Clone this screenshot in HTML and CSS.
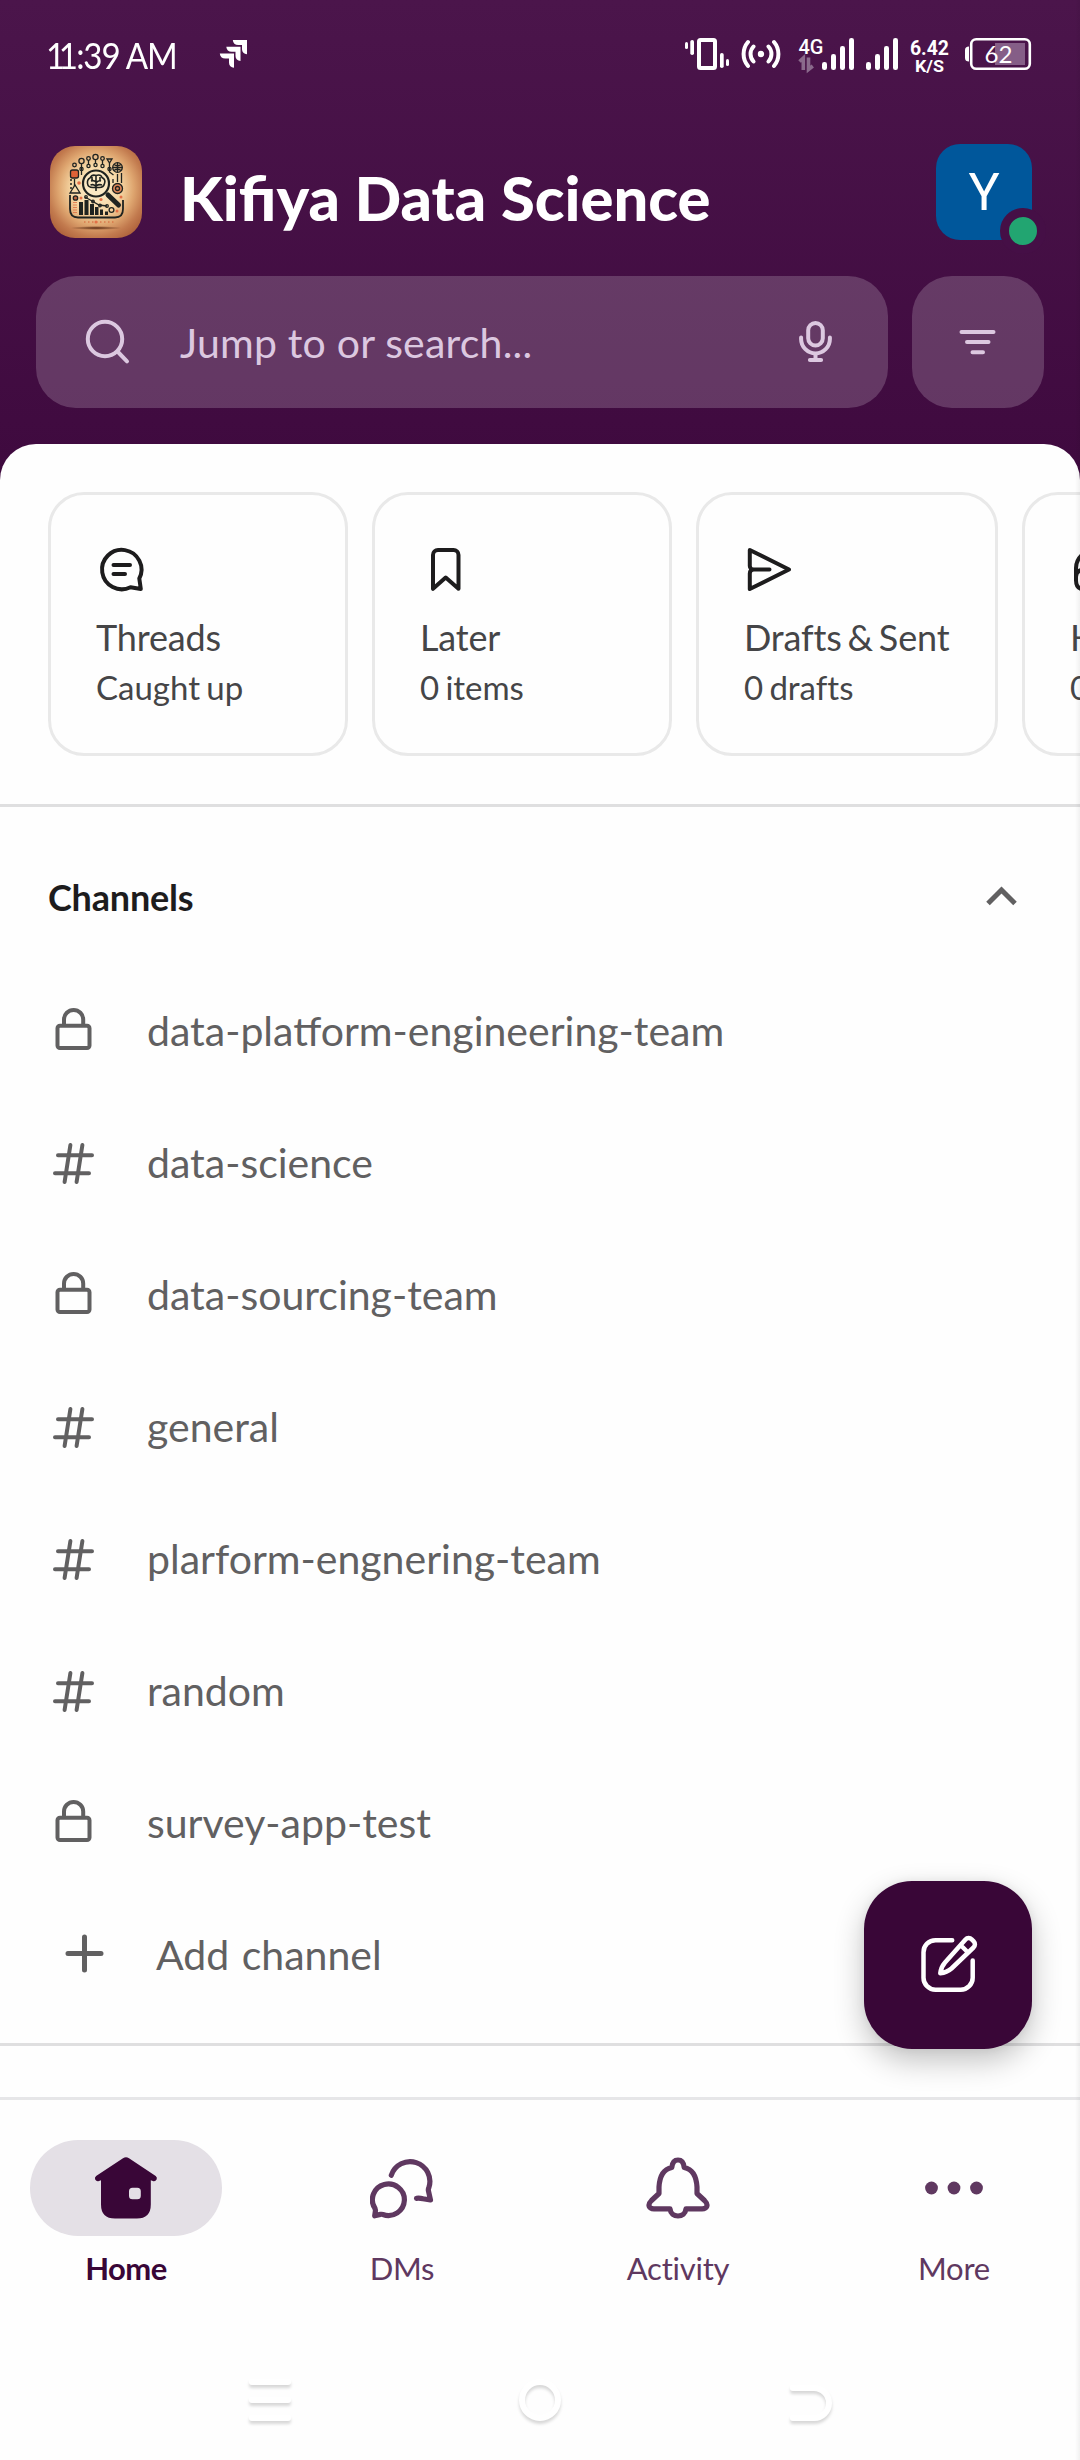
FILE: index.html
```html
<!DOCTYPE html>
<html lang="en">
<head>
<meta charset="utf-8">
<title>Kifiya Data Science</title>
<link rel="stylesheet" href="styles.css">
</head>
<body>
<svg class="defs" width="0" height="0" aria-hidden="true">
  <symbol id="lock" viewBox="0 0 48 48"><g fill="none" stroke="currentColor" stroke-width="4"><rect x="7.5" y="19.7" width="32" height="22.3" rx="2.5"/><path d="M14 19.5v-6a9.6 9.6 0 0 1 19.2 0v6"/></g></symbol>
  <symbol id="hash" viewBox="0 0 48 48"><path d="M8 17.3h34M5 35.3h34M20.4 7l-5.8 37M32.4 7l-5.8 37" fill="none" stroke="currentColor" stroke-width="4" stroke-linecap="round"/></symbol>
</svg>
<div class="app">
  <header class="top">
    <div class="status">
      <span class="time"><span class="ones">11</span>:39 AM</span>
      <svg class="jira" width="30" height="30" viewBox="0 0 30 30" fill="#fff"><path id="j" d="M13.800 1H28v14.300c-3-.3-5-2.300-5-5V6h-3.700c-3.300 0-5.300-2-5.500-5z"/><use href="#j" x="-6.500" y="6.700"/><use href="#j" x="-13" y="13.400"/></svg>
      <svg class="signals" width="352" height="40" viewBox="684 34 352 40">
        <g fill="#fff">
          <rect x="685" y="42" width="3" height="7" rx="1.500"/><rect x="690.300" y="40" width="3.700" height="15" rx="1.800"/>
          <rect x="720" y="53" width="3.700" height="15" rx="1.800"/><rect x="726" y="59" width="3" height="7" rx="1.500"/>
          <circle cx="761" cy="54" r="3.200"/>
          <rect x="822" y="62" width="5" height="8" rx="2.300"/><rect x="831" y="54" width="5" height="16" rx="2.300"/><rect x="840" y="46" width="5" height="24" rx="2.300"/><rect x="849" y="38" width="5" height="32" rx="2.300"/>
          <rect x="866" y="62" width="5" height="8" rx="2.300"/><rect x="875" y="54" width="5" height="16" rx="2.300"/><rect x="884" y="46" width="5" height="24" rx="2.300"/><rect x="893" y="38" width="5" height="32" rx="2.300"/>
          <path d="M969 46.500v15q-4 0-4-3.500v-8q0-3.500 4-3.500z"/>
        </g>
        <rect x="699" y="40" width="16" height="28" rx="1.500" fill="none" stroke="#fff" stroke-width="4"/>
        <g fill="none" stroke="#fff" stroke-width="4" stroke-linecap="round"><path d="M753.500 46.500a11 11 0 0 0 0 15M768.500 46.500a11 11 0 0 1 0 15M748 42a18.500 18.500 0 0 0 0 24M774 42a18.500 18.500 0 0 1 0 24"/></g>
        <path d="M799.500 61.500l3.800-3.500V70M812.800 66l-4.300 3.500V57.500" fill="none" stroke="#8a6a8c" stroke-width="3.600"/>
        <text class="net" x="798.500" y="54.300" textLength="25" lengthAdjust="spacingAndGlyphs">4G</text>
        <text class="rate" x="929.500" y="55" textLength="39" lengthAdjust="spacingAndGlyphs">6.42</text>
        <text class="rate small" x="929.500" y="71.500" textLength="29" lengthAdjust="spacingAndGlyphs">K/S</text>
        <rect x="995" y="43" width="30" height="22" fill="#855e87"/>
        <rect x="971.200" y="39.200" width="58.600" height="29.600" rx="5" fill="none" stroke="#fff" stroke-width="2.600"/>
        <text class="charge" x="998.500" y="62.700" textLength="28" lengthAdjust="spacingAndGlyphs">62</text>
      </svg>
    </div>
    <div class="workspace">
      <svg class="logo" width="92" height="92" viewBox="0 0 92 92">
        <defs><radialGradient id="lg" cx=".5" cy=".46" r=".66"><stop offset="0" stop-color="#fdf0cf"/><stop offset=".4" stop-color="#f6d7a4"/><stop offset=".62" stop-color="#dea56f"/><stop offset=".8" stop-color="#c27a4e"/><stop offset="1" stop-color="#a85a36"/></radialGradient>
        <radialGradient id="sh"><stop offset="0" stop-color="#5b2a12"/><stop offset="1" stop-color="#5b2a12" stop-opacity="0"/></radialGradient></defs>
        <rect width="92" height="92" rx="25" fill="url(#lg)"/>
        <ellipse cx="46" cy="82" rx="26" ry="2" fill="url(#sh)"/>
        <g fill="none" stroke="#1f2320" stroke-width="1.300">
          <circle cx="24.500" cy="19" r="1.800"/><circle cx="31.500" cy="15" r="2.600"/><circle cx="38.500" cy="12.500" r="1.800"/><circle cx="45.500" cy="11" r="2.600"/><circle cx="52.500" cy="12.500" r="1.800"/><path d="M57 13h5l-2.500 4z"/>
          <path d="M31.500 18v11M38.500 14v4M45.500 14v4M52.500 14v4M59.500 17v9l4 3M24.500 33v7M67.500 28v8M71.500 27v10M63 33v4"/>
          <circle cx="38.500" cy="20" r="1.600"/><circle cx="45.500" cy="19" r="1.600"/><circle cx="52.500" cy="20" r="1.600"/><circle cx="31.500" cy="23" r="1.600"/><circle cx="59.500" cy="23" r="1.600"/>
          <circle cx="67.500" cy="21.500" r="4.800"/><path d="M62.500 21.500h10M67.500 16.500v10M64 18.500q3.500 2.500 7 0M64 24.500q3.500-2.500 7 0"/>
          <path d="M20 47l5-8 5 8z"/><path d="M20 34h2M20 38h2M20 42h2"/>
          <rect x="20.500" y="24" width="8" height="8" rx="2" fill="#df6237"/><circle cx="67.500" cy="42.500" r="5" fill="#df8759"/><circle cx="67.500" cy="42.500" r="2"/>
          <circle cx="25.500" cy="52" r="2.200" fill="#bd6540"/><circle cx="61.500" cy="64" r="2.400"/>
          <path d="M35 51l7 4 7 4 8 1"/><circle cx="36" cy="51" r="1.300"/><circle cx="43" cy="55.500" r="1.300"/><circle cx="50" cy="59.500" r="1.300"/><circle cx="57" cy="60" r="1.300"/>
        </g>
        <path d="M20 49v14q0 8.500 8 8.500h37q8 0 8-8.500V54" fill="none" stroke="#1f2320" stroke-width="1.800"/>
        <path d="M29 56h4v13h-4zM34.500 54h4v15h-4zM40 58h4v11h-4zM45 61h3.500v8H45zM50 63.500h3V69h-3zM55 65.500h3V69h-3z" fill="#1f2320"/>
        <path d="M25 56v11" stroke="#df6237" stroke-width="4" stroke-dasharray="1 1.500" opacity=".7"/>
        <path d="M34 76h30" stroke="#d65f35" stroke-width="1.200" stroke-dasharray="1.500 2.500"/>
        <g fill="#e47046"><circle cx="29" cy="37" r="1.800"/><circle cx="31" cy="52" r="1.500"/><circle cx="51" cy="53.500" r="1.600"/><circle cx="46" cy="76" r="1.500"/><circle cx="67" cy="65" r="1.500"/><circle cx="71" cy="51" r="1.500"/></g>
        <circle cx="46" cy="37.500" r="13" fill="#fbe9c4" stroke="#1f2320" stroke-width="2.200"/>
        <path d="M58 49l10.500 10" stroke="#1f2320" stroke-width="5" stroke-linecap="round"/>
        <path d="M40 32q2-4 6-2.500 5-1.500 6 2 4 2 2.500 6-1 4-5 4H43q-5 0-5.500-4-.5-4 2.500-5.500zM46 29v16M41 35q3-1 5 1M51 35q-3-1-5 2M40.500 39q3-1 5 1M52 39q-3-1-6 1M42 31v4M50 31v4" fill="none" stroke="#1f2320" stroke-width="1.600"/>
      </svg>
      <h1>Kifiya Data Science</h1>
      <div class="avatar">Y<i class="presence"></i></div>
    </div>
    <div class="tools">
      <div class="search">
        <svg width="60" height="60" viewBox="0 0 60 60" fill="none" stroke="currentColor" stroke-width="4" stroke-linecap="round"><circle cx="27" cy="27" r="17.200"/><path d="M39.500 39.500L49 49.300"/></svg>
        <span>Jump to or search...</span>
        <svg width="48" height="60" viewBox="0 0 48 60" fill="none" stroke="currentColor" stroke-width="4" stroke-linecap="round"><rect x="16.200" y="11" width="14.600" height="22.500" rx="7.300"/><path d="M9.100 25.500v1.500a14.400 14.400 0 0 0 28.800 0v-1.500M23.500 42v6M17.900 48h11.200"/></svg>
      </div>
      <div class="filter">
        <svg width="48" height="48" viewBox="0 0 48 48" fill="none" stroke="currentColor" stroke-width="4" stroke-linecap="round"><path d="M7.500 14h32M13 24h21.500M18.500 34.200h10.500"/></svg>
      </div>
    </div>
  </header>
  <main class="sheet">
    <div class="cards">
      <div class="card">
        <svg width="60" height="60" viewBox="0 0 60 60"><path d="M34.500 47.200A19.700 19.700 0 1 1 43.300 38.500L44.800 49z"/><path d="M17.500 25h16.500M17.500 34h11.500"/></svg>
        <b>Threads</b><span>Caught up</span>
      </div>
      <div class="card">
        <svg width="60" height="60" viewBox="0 0 60 60"><path d="M13 48.800V15a5 5 0 0 1 5-5h15.500a5 5 0 0 1 5 5V48.800L25.700 37.500z"/></svg>
        <b>Later</b><span>0 items</span>
      </div>
      <div class="card wide">
        <svg width="60" height="60" viewBox="0 0 60 60"><path d="M5.800 26V10L45 29.500 5.800 49V33.500c0-2.500 1.500-4 4-4H25.500M5.800 26c0 2 1.500 3.500 4 3.500"/></svg>
        <b>Drafts &amp; Sent</b><span>0 drafts</span>
      </div>
      <div class="card">
        <svg width="60" height="60" viewBox="0 0 60 60"><path d="M6 41V28a19 18 0 0 1 38 0v13M6 40v-3q0-7 7-7h3v19h-3q-7 0-7-9zM44 40v-3q0-7-7-7h-3v19h3q7 0 7-9z"/></svg>
        <b>Huddles</b><span>0 live</span>
      </div>
    </div>
    <section class="channels">
      <div class="section-head"><h2>Channels</h2>
        <svg width="48" height="48" viewBox="0 0 48 48"><path d="M10 30.500L23.500 17 37 30.500" fill="none" stroke="#616061" stroke-width="5"/></svg>
      </div>
      <ul>
        <li><svg width="48" height="48"><use href="#lock"/></svg>data-platform-engineering-team</li>
        <li><svg width="48" height="48"><use href="#hash"/></svg>data-science</li>
        <li><svg width="48" height="48"><use href="#lock"/></svg>data-sourcing-team</li>
        <li><svg width="48" height="48"><use href="#hash"/></svg>general</li>
        <li><svg width="48" height="48"><use href="#hash"/></svg>plarform-engnering-team</li>
        <li><svg width="48" height="48"><use href="#hash"/></svg>random</li>
        <li><svg width="48" height="48"><use href="#lock"/></svg>survey-app-test</li>
        <li class="add"><svg width="48" height="48" viewBox="0 0 48 48"><path d="M8 23.500h33M24.500 7v33" stroke="currentColor" stroke-width="5" stroke-linecap="round"/></svg>Add channel</li>
      </ul>
    </section>
    <button class="compose" aria-label="Compose">
      <svg width="64" height="64" viewBox="0 0 64 64" fill="none" stroke="#fff" stroke-width="4.500" stroke-linecap="round" stroke-linejoin="round"><path d="M36.200 7.200H19.500a12 12 0 0 0-12 12v25.500a12 12 0 0 0 12 12h25.200a12 12 0 0 0 12-12V27.500"/><path d="M24.300 40.300q.7-6.300 4.700-10.800L49.500 6.500a4.300 4.300 0 0 1 6.200-.2l2 2a4.300 4.300 0 0 1-.2 6.200L35.500 35.500q-4.500 4-11.200 4.800zM44.500 12l7.500 7.500"/></svg>
    </button>
  </main>
  <nav class="tabs">
    <a class="tab on"><span class="pill"><svg width="64" height="64" viewBox="0 0 64 64"><path fill="#390637" fill-rule="evenodd" d="M29 2.300q3-2 6 0L61.700 20q2 1.800.8 3.800t-3.700 1.200l-2-.8V48.500q0 14-14 14H21q-14 0-14-14V24.200l-2 .8q-2.500.8-3.700-1.200t.8-3.800zM38.500 31.700a3.500 3.500 0 0 0-3.500 3.500v4.500a3.500 3.500 0 0 0 3.500 3.500h4.800a3.500 3.500 0 0 0 3.500-3.500v-4.500a3.500 3.500 0 0 0-3.500-3.500z"/></svg></span>Home</a>
    <a class="tab"><span class="pill"><svg width="64" height="64" viewBox="0 0 64 64"><path d="M21.300 19.300A19.600 19.600 0 1 1 58.900 31.500q-.9 1.700-.4 3.700L60.500 44l-7.500-1.200q-3-.8-6.500-.5M4.900 52.200A16 15.700 0 1 1 12.900 58.500q-1.200-.4-2.500-.1L4.700 59.800 5.500 54.400z"/></svg></span>DMs</a>
    <a class="tab"><span class="pill"><svg width="64" height="64" viewBox="0 0 64 64"><path d="M25.800 11.500C26.300 6.500 28.500 4 32 4S37.700 6.500 38.200 11.500C48 13.500 50.500 22 51 31v6.500L58.500 44.500C63 49 61 52.800 56 52.800H40C39.500 57.500 36 60 32 60S24.500 57.500 24 52.800H8C3 52.800 1 49 5.500 44.500L13 37.500V31C13.500 22 16 13.500 25.800 11.500z"/></svg></span>Activity</a>
    <a class="tab"><span class="pill"><svg class="dots" width="64" height="64" viewBox="0 0 64 64"><circle cx="9.500" cy="32" r="6.400"/><circle cx="32" cy="32" r="6.400"/><circle cx="54.500" cy="32" r="6.400"/></svg></span>More</a>
  </nav>
  <footer class="system">
    <svg width="48" height="60" viewBox="0 0 48 60"><path d="M6 12h36M6 30h36M6 48h36"/></svg>
    <svg width="48" height="60" viewBox="0 0 48 60"><circle cx="24" cy="30" r="18"/></svg>
    <svg width="48" height="60" viewBox="0 0 48 60"><path d="M7 18h21a15 15 0 0 1 0 30H7"/></svg>
  </footer>
</div>
</body>
</html>
```
FILE: styles.css
```css
* { box-sizing: border-box; }
body { margin: 0; font-family: Lato, "Liberation Sans", sans-serif; }
.defs { position: absolute; }
h1, h2, ul { margin: 0; padding: 0; }
svg { display: block; flex: none; }

.app {
  position: relative;
  width: 1080px;
  height: 2460px;
  overflow: hidden;
  display: flex;
  flex-direction: column;
  background: linear-gradient(#4b154b 0, #3f0a3f 460px, #390637 500px);
}
/* faint shade along the screen's right edge */
.app::after {
  content: "";
  position: absolute;
  inset: 0 0 0 auto;
  width: 5px;
  background: linear-gradient(90deg, rgba(0,0,0,0), rgba(0,0,0,.05));
}

.top { height: 444px; color: #fff; }
.status { height: 144px; padding: 34px 44px 0 46px; display: flex; align-items: flex-start; }
.time { width: 173px; font-size: 36px; line-height: 42px; letter-spacing: -1.200px; white-space: nowrap; transform: scaleX(.92); transform-origin: 0 0; }
.ones { letter-spacing: -7px; margin-right: 5px; }
.jira { margin-top: 5px; }
.signals { margin-left: auto; }
.signals text { fill: #fff; font-family: Roboto, sans-serif; font-weight: 500; }
.net { font-size: 21px; }
.rate { font-size: 20px; text-anchor: middle; }
.signals .rate { font-weight: 700; }
.rate.small { font-size: 16.500px; }
.signals .charge { font-family: Lato, sans-serif; font-size: 24px; font-weight: 400; text-anchor: middle; }

.workspace { height: 132px; padding: 0 48px 0 50px; display: flex; align-items: flex-start; }
.logo { margin-top: 2px; }
h1 { margin: 17px 0 0 38px; font-size: 61.500px; line-height: 72px; font-weight: 900; white-space: nowrap; }
.avatar {
  position: relative;
  width: 96px; height: 96px;
  margin-left: auto;
  border-radius: 24px;
  background: #00579b;
  font: 400 52px/97px Roboto, sans-serif;
  text-align: center;
}
.presence {
  position: absolute;
  left: 64px; top: 64px;
  width: 46px; height: 46px;
  border: 9px solid #450f46;
  border-radius: 50%;
  background: #22a571;
}

.tools { padding: 0 36px; display: flex; gap: 24px; color: #dcc8e0; }
.search, .filter { height: 132px; border-radius: 40px; background: rgba(255,255,255,.185); display: flex; align-items: center; }
.search { flex: 1; padding: 0 48px 0 42px; font-size: 41px; letter-spacing: .200px; }
.search span { flex: 1; margin-left: 42px; }
.filter { width: 132px; justify-content: center; }

.sheet { position: relative; height: 1653px; padding-top: 48px; background: #fefefe; border-radius: 36px 36px 0 0; overflow: hidden; }
.cards { height: 315px; padding-left: 48px; display: flex; gap: 24px; align-items: flex-start; border-bottom: 3px solid #dfdfe0; }
.card {
  flex: none;
  width: 300px; height: 264px;
  padding: 45px;
  border: 3px solid #e9e9e9;
  border-radius: 36px;
  display: flex; flex-direction: column;
  color: #454547;
  white-space: nowrap;
  font-variant-ligatures: none;
}
.card.wide { width: 302px; }
.card svg { fill: none; stroke: #1d1c1d; stroke-width: 4; stroke-linecap: round; stroke-linejoin: round; }
.card b { margin-top: 15px; font-size: 36px; line-height: 44px; font-weight: 400; letter-spacing: -.150px; word-spacing: -3.200px; }
.card span { margin-top: 8px; font-size: 33px; line-height: 40px; word-spacing: -2.200px; }

.channels { height: 1239px; border-bottom: 3px solid #dfdfe0; }
.section-head { height: 157px; padding: 66px 54px 0 48px; display: flex; justify-content: space-between; }
h2 { font-size: 36px; line-height: 48px; font-weight: 700; letter-spacing: -.200px; color: #1d1c1d; }
ul { list-style: none; }
li { height: 132px; padding-left: 50px; display: flex; align-items: center; gap: 49px; font-size: 41px; color: #616061; }
li.add { padding-left: 60px; gap: 48px; word-spacing: 2px; }
.compose {
  position: absolute;
  left: 864px; top: 1437px;
  width: 168px; height: 168px;
  padding: 0; border: 0;
  border-radius: 48px;
  background: #390637;
  box-shadow: 0 12px 30px rgba(0,0,0,.24), 0 0 10px rgba(0,0,0,.06);
  display: grid; place-items: center;
}

.tabs { height: 223px; padding: 40px 30px 0; border-top: 3px solid #e6e6e8; background: #fefefe; display: flex; justify-content: space-between; }
.tab { width: 192px; display: flex; flex-direction: column; align-items: center; gap: 13px; font-size: 31px; line-height: 38px; letter-spacing: -.250px; font-variant-ligatures: none; color: #5f3860; }
.tab.on { font-weight: 700; letter-spacing: -.500px; color: #390637; }
.pill { width: 192px; height: 96px; border-radius: 48px; display: grid; place-items: center; }
.on .pill { background: #e4e0e6; }
.pill svg { fill: none; stroke: #5f3860; stroke-width: 5.200; stroke-linecap: round; stroke-linejoin: round; }
.on .pill svg { stroke: none; }
.pill .dots { fill: #5f3860; stroke: none; }

.system { flex: 1; padding: 50px 246px 0; display: flex; justify-content: space-between; align-items: flex-start; background: #fefefe; }
.system svg { fill: none; stroke: #fff; stroke-width: 6; stroke-linecap: round; filter: drop-shadow(0 3px 1.500px rgba(0,0,0,.15)); }
```
